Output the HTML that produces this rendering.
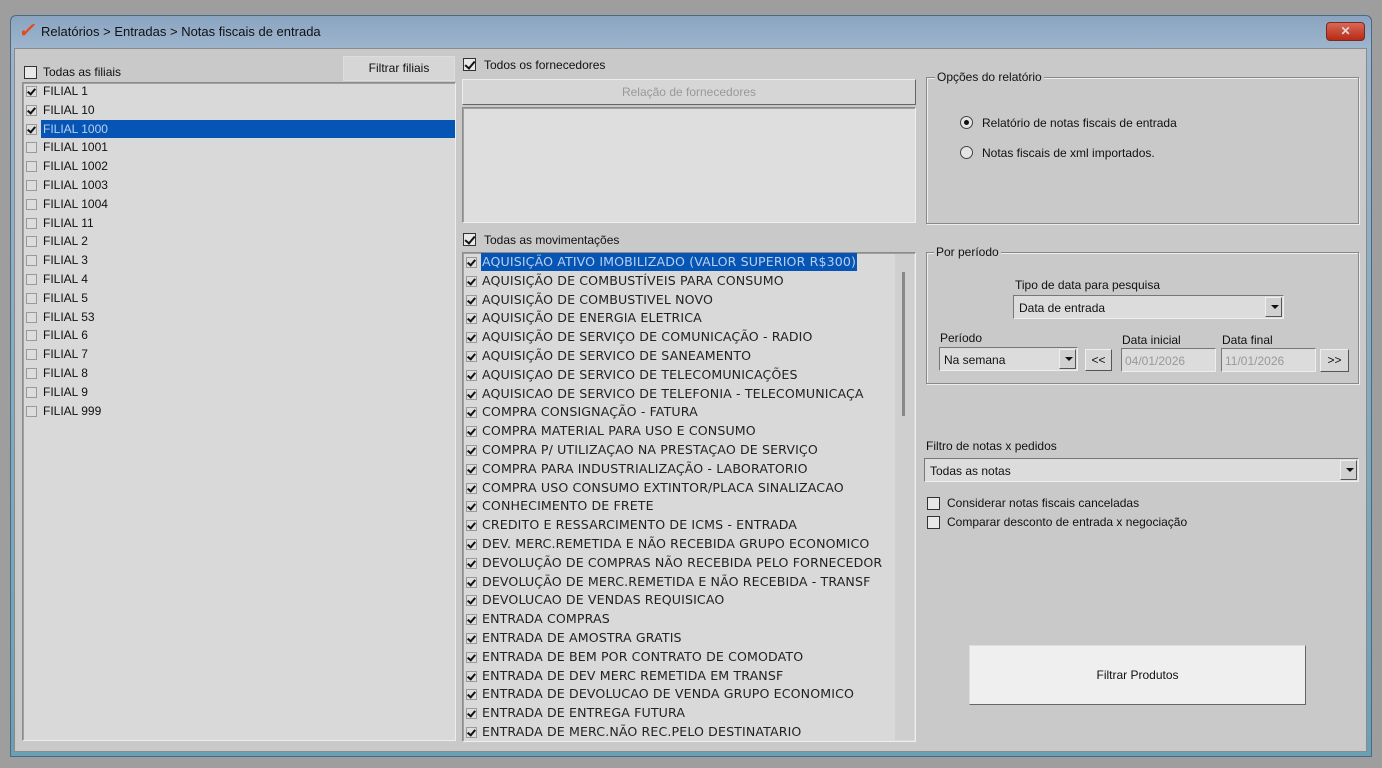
<!DOCTYPE html>
<html><head><meta charset="utf-8"><style>
*{box-sizing:border-box;margin:0;padding:0}
body{width:1382px;height:768px;background:#9e9e9e;position:relative;overflow:hidden;font-family:"Liberation Sans",sans-serif;font-size:12px;color:#111}
.a{position:absolute}
.win{left:10px;top:15px;width:1362px;height:742px;border:1px solid #4a6a80;border-radius:6px 6px 0 0;background:linear-gradient(#8aa4c0,#9cb4cc 30px,#6aa0b4);}
.client{left:14px;top:48px;width:1353px;height:704px;background:#c9c9c9;border:1px solid #8a8a8a}
.list{background:#d9d9d9;border:1px solid #8c8c8c;border-right-color:#eee;border-bottom-color:#eee;box-shadow:inset 1px 1px 0 #a0a0a0}
.cb{position:absolute;width:11px;height:11px;border:1px solid #999;background:#ddd}
.cb.k::after{content:"";position:absolute;left:2px;top:0px;width:3px;height:6px;border:solid #111;border-width:0 2px 2px 0;transform:rotate(40deg)}
.row{position:absolute;height:18px;line-height:18px;white-space:nowrap}
.mv{font-family:"DejaVu Sans",sans-serif;font-size:12.6px;letter-spacing:0.12px;color:#222}
.sel{background:#0654b4;color:#b8d0f0}
.cbb{position:absolute;width:13px;height:13px;border:1px solid #333;background:#e8e8e8}
.cbb.k::after{content:"";position:absolute;left:3px;top:0px;width:4px;height:8px;border:solid #111;border-width:0 2px 2px 0;transform:rotate(40deg)}
.grp{border:1px solid #888;box-shadow:1px 1px 0 #eee, inset 1px 1px 0 #eee}
.gl{background:#c9c9c9;padding:0 2px}
.btn{background:#d6d6d6;border:1px solid #eee;border-right-color:#666;border-bottom-color:#666;text-align:center}
.inp{background:#dcdcdc;border:1px solid #777;border-right-color:#eee;border-bottom-color:#eee}
.arr{position:absolute;right:1px;top:1px;bottom:1px;width:17px;background:#d0d0d0;border:1px solid #eee;border-right-color:#555;border-bottom-color:#555}
.arr::after{content:"";position:absolute;left:5px;top:7px;border:4px solid transparent;border-top:4px solid #111;border-bottom:0}
.radio{position:absolute;width:13px;height:13px;border:1px solid #444;border-radius:50%;background:#e4e4e4}
.radio.on::after{content:"";position:absolute;left:3px;top:3px;width:5px;height:5px;border-radius:50%;background:#111}
</style></head><body>
<div class="a win"></div>
<div class="a" style="left:18px;top:18px;font-size:20px;color:#e84818;font-weight:bold;font-style:italic">✓</div>
<div class="a" style="left:41px;top:24px;font-size:13px;color:#111">Relatórios &gt; Entradas &gt; Notas fiscais de entrada</div>
<div class="a" style="left:1326px;top:22px;width:39px;height:19px;border-radius:4px;background:linear-gradient(#d86858,#b82a14);border:1px solid #7a2a20;color:#ddd;text-align:center;font-weight:bold;font-size:12px;line-height:17px">✕</div>
<div class="a client"></div>

<div class="cbb a" style="left:24px;top:66px"></div>
<div class="a" style="left:43px;top:65px">Todas as filiais</div>
<div class="a btn" style="left:343px;top:56px;width:112px;height:25px;line-height:23px;border-color:#ddd">Filtrar filiais</div>
<div class="a list" style="left:22px;top:82px;width:434px;height:659px"></div>
<div id="fil"></div>

<div class="cbb k a" style="left:463px;top:58px"></div>
<div class="a" style="left:484px;top:58px">Todos os fornecedores</div>
<div class="a btn" style="left:462px;top:79px;width:454px;height:26px;line-height:24px;color:#999">Relação de fornecedores</div>
<div class="a list" style="left:462px;top:107px;width:454px;height:116px;background:#dedede"></div>
<div class="cbb k a" style="left:463px;top:233px"></div>
<div class="a" style="left:484px;top:233px">Todas as movimentações</div>
<div class="a list" style="left:462px;top:252px;width:454px;height:490px"></div>
<div id="mov"></div>
<div class="a" style="left:895px;top:254px;width:19px;height:486px;background:#cfcfcf"></div>
<div class="a" style="left:902px;top:272px;width:3px;height:144px;background:#888"></div>

<div class="a grp" style="left:926px;top:77px;width:433px;height:147px"></div>
<div class="a gl" style="left:935px;top:70px">Opções do relatório</div>
<div class="radio on" style="left:960px;top:116px"></div>
<div class="a" style="left:982px;top:116px">Relatório de notas fiscais de entrada</div>
<div class="radio" style="left:960px;top:146px"></div>
<div class="a" style="left:982px;top:146px">Notas fiscais de xml importados.</div>

<div class="a grp" style="left:926px;top:252px;width:433px;height:132px"></div>
<div class="a gl" style="left:934px;top:245px">Por período</div>
<div class="a" style="left:1015px;top:278px">Tipo de data para pesquisa</div>
<div class="a inp" style="left:1013px;top:295px;width:271px;height:24px"><span class="a" style="left:5px;top:5px">Data de entrada</span><div class="arr"></div></div>
<div class="a" style="left:940px;top:331px">Período</div>
<div class="a inp" style="left:939px;top:347px;width:139px;height:24px"><span class="a" style="left:4px;top:5px">Na semana</span><div class="arr"></div></div>
<div class="a btn" style="left:1085px;top:349px;width:27px;height:22px;line-height:20px;border-color:#eee #555 #555 #eee">&lt;&lt;</div>
<div class="a" style="left:1122px;top:333px">Data inicial</div>
<div class="a inp" style="left:1121px;top:348px;width:95px;height:24px;color:#999"><span class="a" style="left:3px;top:5px">04/01/2026</span></div>
<div class="a" style="left:1222px;top:333px">Data final</div>
<div class="a inp" style="left:1221px;top:348px;width:95px;height:24px;color:#999"><span class="a" style="left:3px;top:5px">11/01/2026</span></div>
<div class="a btn" style="left:1320px;top:349px;width:29px;height:23px;line-height:20px;border-color:#eee #555 #555 #eee">&gt;&gt;</div>

<div class="a" style="left:926px;top:439px">Filtro de notas x pedidos</div>
<div class="a inp" style="left:924px;top:458px;width:435px;height:24px"><span class="a" style="left:5px;top:5px">Todas as notas</span><div class="arr"></div></div>
<div class="cbb a" style="left:927px;top:497px"></div>
<div class="a" style="left:947px;top:496px">Considerar notas fiscais canceladas</div>
<div class="cbb a" style="left:927px;top:516px"></div>
<div class="a" style="left:947px;top:515px">Comparar desconto de entrada x negociação</div>
<div class="a" style="left:969px;top:645px;width:337px;height:60px;background:#efefef;border:1px solid #ddd;border-right-color:#666;border-bottom-color:#666;text-align:center;line-height:58px">Filtrar Produtos</div>

<script>
var f=["FILIAL 1","FILIAL 10","FILIAL 1000","FILIAL 1001","FILIAL 1002","FILIAL 1003","FILIAL 1004","FILIAL 11","FILIAL 2","FILIAL 3","FILIAL 4","FILIAL 5","FILIAL 53","FILIAL 6","FILIAL 7","FILIAL 8","FILIAL 9","FILIAL 999"];
var h="";
f.forEach(function(t,i){var y=82+i*18.8;h+='<div class="cb'+(i<3?' k':'')+'" style="left:26px;top:'+(y+4)+'px"></div><div class="row'+(i==2?' sel':'')+'" style="left:41px;top:'+y+'px;width:'+(i==2?414:300)+'px;padding-left:2px">'+t+'</div>';});
document.getElementById('fil').innerHTML=h;
var m=["AQUISIÇÃO ATIVO IMOBILIZADO (VALOR SUPERIOR R$300)","AQUISIÇÃO DE COMBUSTÍVEIS PARA CONSUMO","AQUISIÇÃO DE COMBUSTIVEL NOVO","AQUISIÇÃO DE ENERGIA ELETRICA","AQUISIÇÃO DE SERVIÇO DE COMUNICAÇÃO - RADIO","AQUISIÇÃO DE SERVICO DE SANEAMENTO","AQUISIÇAO DE SERVICO DE TELECOMUNICAÇÕES","AQUISICAO DE SERVICO DE TELEFONIA - TELECOMUNICAÇA","COMPRA CONSIGNAÇÃO - FATURA","COMPRA MATERIAL PARA USO E CONSUMO","COMPRA P/ UTILIZAÇAO NA PRESTAÇAO DE SERVIÇO","COMPRA PARA INDUSTRIALIZAÇÃO - LABORATORIO","COMPRA USO CONSUMO EXTINTOR/PLACA SINALIZACAO","CONHECIMENTO DE FRETE","CREDITO E RESSARCIMENTO DE ICMS - ENTRADA","DEV. MERC.REMETIDA E NÃO RECEBIDA GRUPO ECONOMICO","DEVOLUÇÃO DE COMPRAS NÃO RECEBIDA PELO FORNECEDOR","DEVOLUÇÃO DE MERC.REMETIDA E NÃO RECEBIDA - TRANSF","DEVOLUCAO DE VENDAS REQUISICAO","ENTRADA COMPRAS","ENTRADA DE AMOSTRA GRATIS","ENTRADA DE BEM POR CONTRATO DE COMODATO","ENTRADA DE DEV MERC REMETIDA EM TRANSF","ENTRADA DE DEVOLUCAO DE VENDA GRUPO ECONOMICO","ENTRADA DE ENTREGA FUTURA","ENTRADA DE MERC.NÃO REC.PELO DESTINATARIO"];
h="";
m.forEach(function(t,i){var y=253+i*18.8;h+='<div class="cb k" style="left:466px;top:'+(y+4)+'px"></div><div class="row mv'+(i==0?' sel':'')+'" style="left:481px;top:'+y+'px;max-width:412px;overflow:hidden;padding:0 1px">'+t+'</div>';});
document.getElementById('mov').innerHTML=h;
</script>
</body></html>
